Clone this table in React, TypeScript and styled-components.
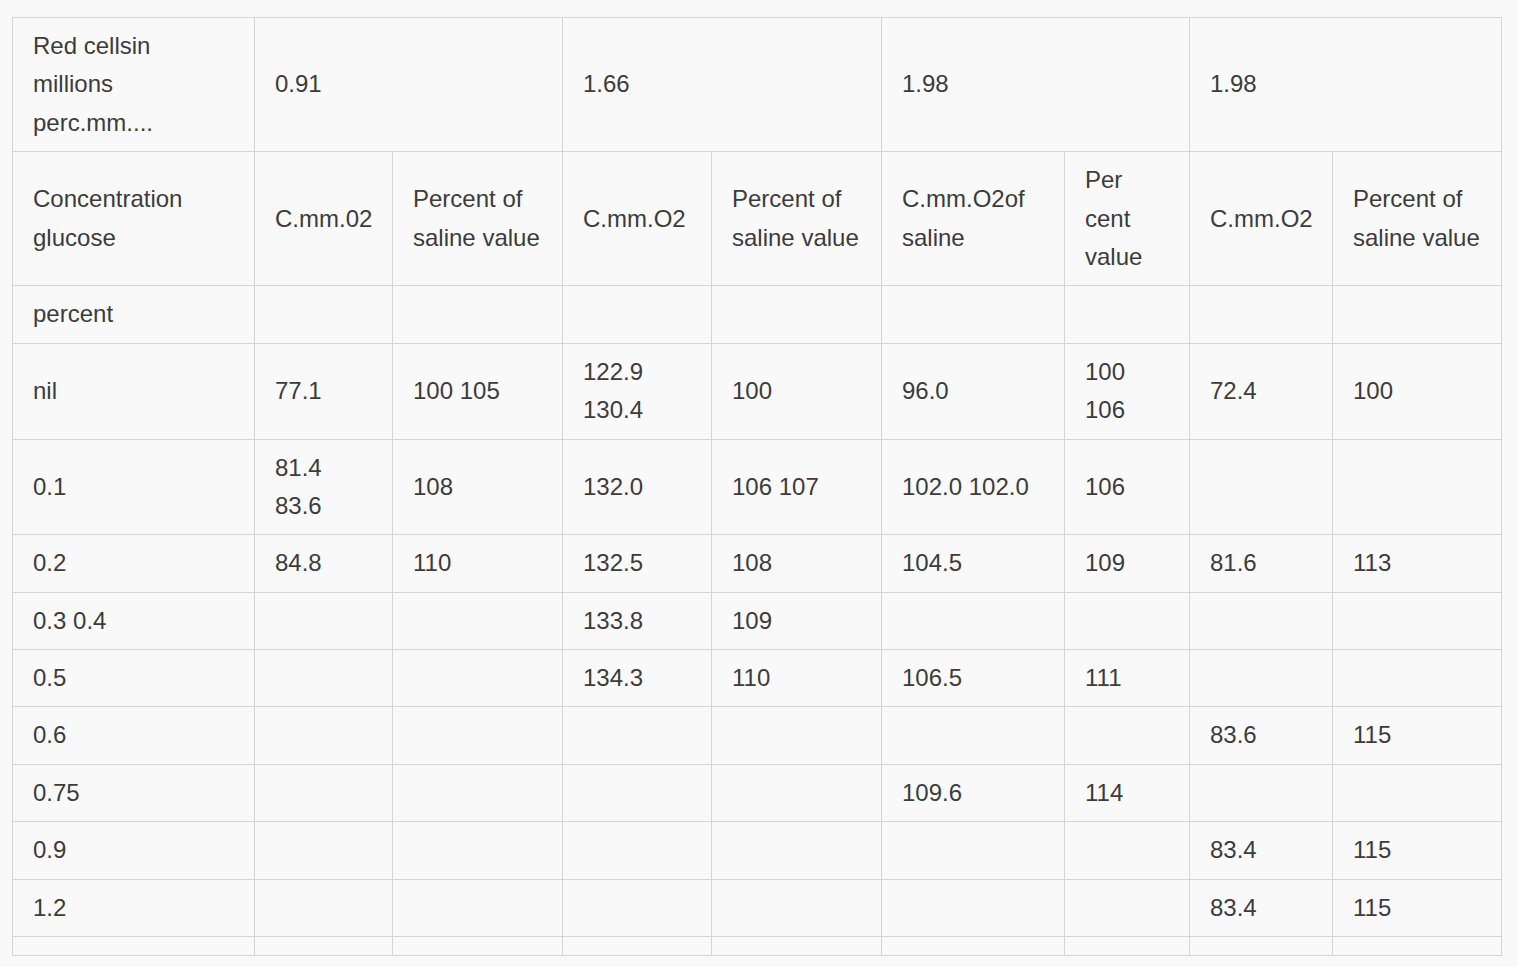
import styled, { createGlobalStyle } from "styled-components";

const GlobalStyle = createGlobalStyle`
    html, body {
        margin: 0;
        padding: 0;
        background: #f9f9f9;
    }
`;

type Cell = string | { text: string; span: number };

const columns = [242, 138, 170, 149, 170, 183, 125, 143, 169];

const rows: Cell[][] = [
    [
        "Red cellsin millions perc.mm....",
        { text: "0.91", span: 2 },
        { text: "1.66", span: 2 },
        { text: "1.98", span: 2 },
        { text: "1.98", span: 2 },
    ],
    [
        "Concentration glucose",
        "C.mm.02",
        "Percent of saline value",
        "C.mm.O2",
        "Percent of saline value",
        "C.mm.O2of saline",
        "Per cent value",
        "C.mm.O2",
        "Percent of saline value",
    ],
    ["percent", "", "", "", "", "", "", "", ""],
    ["nil", "77.1", "100 105", "122.9 130.4", "100", "96.0", "100 106", "72.4", "100"],
    ["0.1", "81.4 83.6", "108", "132.0", "106 107", "102.0 102.0", "106", "", ""],
    ["0.2", "84.8", "110", "132.5", "108", "104.5", "109", "81.6", "113"],
    ["0.3 0.4", "", "", "133.8", "109", "", "", "", ""],
    ["0.5", "", "", "134.3", "110", "106.5", "111", "", ""],
    ["0.6", "", "", "", "", "", "", "83.6", "115"],
    ["0.75", "", "", "", "", "109.6", "114", "", ""],
    ["0.9", "", "", "", "", "", "", "83.4", "115"],
    ["1.2", "", "", "", "", "", "", "83.4", "115"],
    ["", "", "", "", "", "", "", "", ""],
];

export default function App() {
    return (
        <Page>
            <GlobalStyle />
            <DataTable>
                <colgroup>
                    {columns.map((w, i) => (
                        <col key={i} style={{ width: w }} />
                    ))}
                </colgroup>
                <tbody>
                    {rows.map((row, r) => (
                        <tr key={r}>
                            {row.map((cell, c) =>
                                typeof cell === "string" ? (
                                    <Td key={c}>{cell}</Td>
                                ) : (
                                    <Td key={c} colSpan={cell.span}>
                                        {cell.text}
                                    </Td>
                                )
                            )}
                        </tr>
                    ))}
                </tbody>
            </DataTable>
        </Page>
    );
}

const Page = styled.div`
    padding: 17px 0 0 12px;
`;

const DataTable = styled.table`
    width: 1490px;
    table-layout: fixed;
    border-collapse: collapse;
    background: #f9f9f9;
    font-family: "Liberation Sans", Arial, sans-serif;
    font-size: 24px;
    line-height: 1.6;
    color: #3c3c3c;
`;

const Td = styled.td`
    border: 1px solid #d4d4d4;
    padding: 9px 20px;
    vertical-align: middle;
    text-align: left;
`;
